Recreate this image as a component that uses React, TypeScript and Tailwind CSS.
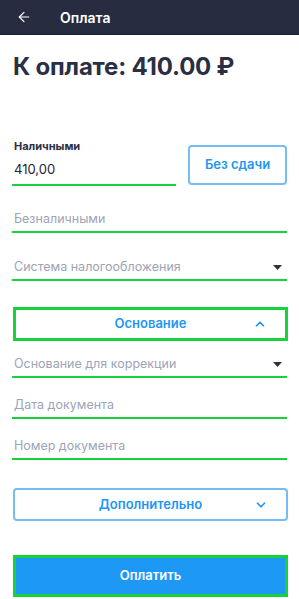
import { ArrowLeft, ChevronUp, ChevronDown } from 'lucide-react'

const font = { fontFamily: 'Inter, "Noto Sans", sans-serif' }

function Caret() {
  return (
    <svg width="9" height="5" viewBox="0 0 9 5" className="mr-[5px]">
      <path d="M0 0h9L4.5 5z" fill="#2f3340" />
    </svg>
  )
}

function Field({ label, select, className }: { label: string; select?: boolean; className?: string }) {
  return (
    <div className={className}>
      <div className="h-[24px] flex items-center justify-between pl-[2px]">
        <span className="text-[12.5px] text-[#9ca4b8]">{label}</span>
        {select && <Caret />}
      </div>
      <div className="h-[2px] bg-[#18d23a]" />
    </div>
  )
}

export default function App() {
  return (
    <div className="w-[299px] h-[599px] bg-white overflow-hidden" style={font}>
      <header className="h-[35px] bg-[#272c40] flex items-center pl-[16px] border-b border-[#1c2030]">
        <ArrowLeft size={16} strokeWidth={1.75} className="text-white" />
        <span className="ml-[28px] text-white text-[14px] font-semibold">Оплата</span>
      </header>

      <div className="px-[12px]">
        <h1 className="mt-[16px] h-[32px] flex items-center pl-[1px] text-[24px] font-bold text-[#2a2f42] tracking-[-0.2px]">
          К оплате: 410.00 ₽
        </h1>

        <div className="mt-[55px] flex items-end gap-[12px]">
          <div className="w-[164px]">
            <div className="h-[16px] flex items-center pl-[2px] text-[11px] font-bold text-[#2a2f42]">Наличными</div>
            <div className="h-[30px] flex items-center pt-[2px] pl-[2px] text-[13px] text-[#1f2333]">410,00</div>
            <div className="h-[2px] bg-[#18d23a]" />
          </div>
          <button className="mb-[1px] w-[99px] h-[40px] rounded-[4px] border-2 border-[#74bdf7] text-[13px] font-semibold text-[#2196f3]">
            Без сдачи
          </button>
        </div>

        <Field label="Безналичными" className="mt-[21px]" />
        <Field label="Система налогообложения" select className="mt-[22px]" />

        <button className="mt-[26px] ml-[1px] w-[275px] h-[34px] border-[3px] border-[#18d23a] flex items-center relative">
          <span className="flex-1 text-center text-[13px] font-semibold text-[#2196f3]">Основание</span>
          <ChevronUp size={14} strokeWidth={3} className="absolute right-[18px] text-[#2196f3]" />
        </button>

        <Field label="Основание для коррекции" select className="mt-[11px]" />
        <Field label="Дата документа" className="mt-[15px]" />
        <Field label="Номер документа" className="mt-[15px]" />

        <button className="mt-[28px] ml-[1px] w-[275px] h-[33px] rounded-[4px] border-2 border-[#74bdf7] flex items-center relative">
          <span className="flex-1 text-center text-[13px] font-semibold text-[#2196f3]">Дополнительно</span>
          <ChevronDown size={14} strokeWidth={3} className="absolute right-[18px] text-[#2196f3]" />
        </button>

        <button className="mt-[34px] ml-[1px] w-[275px] h-[42px] bg-[#1e98f5] border-[3px] border-[#18d23a] text-white text-[13px] font-semibold">
          Оплатить
        </button>
      </div>
    </div>
  )
}
